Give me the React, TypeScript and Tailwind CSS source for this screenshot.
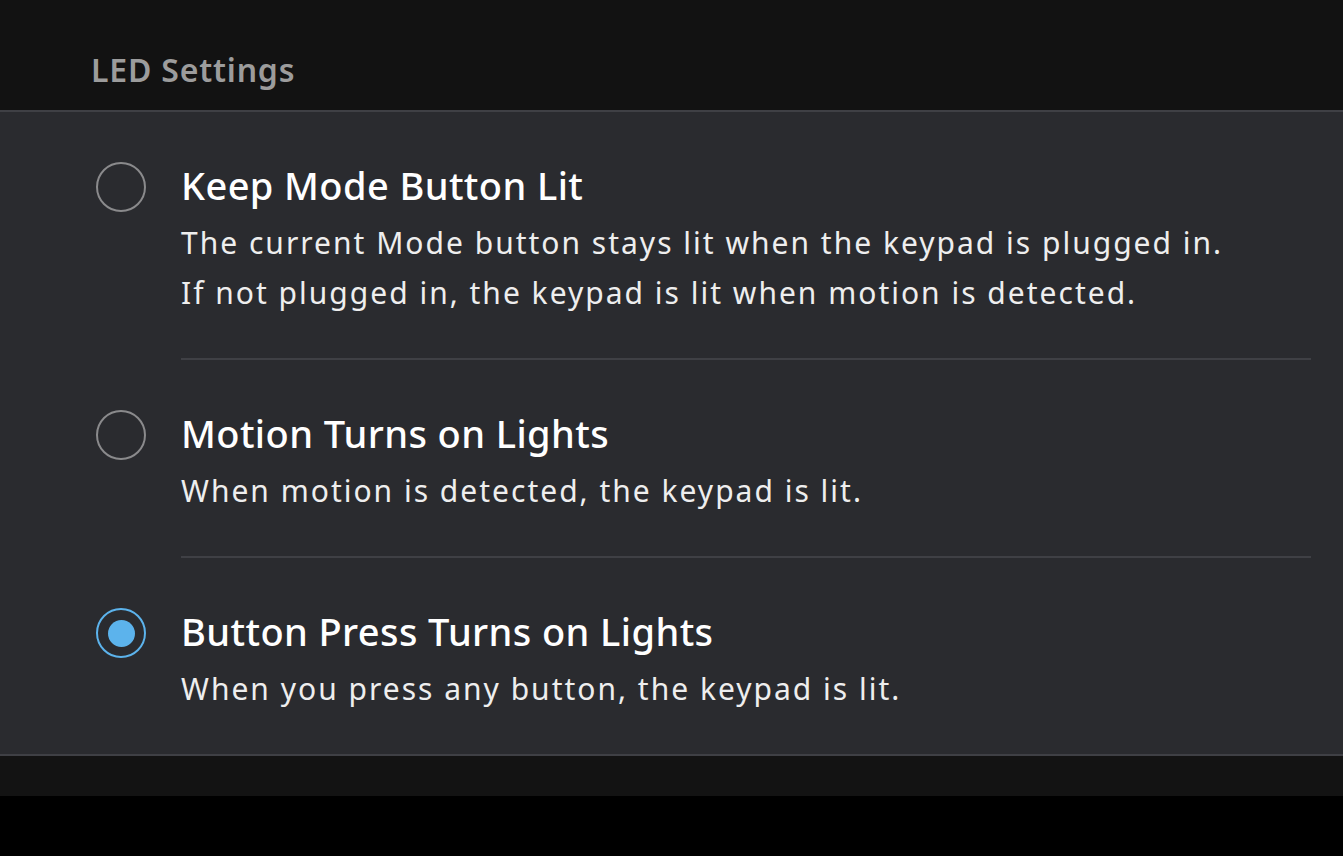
import React, { useState } from "react";

const options = [
  {
    id: "keep",
    title: "Keep Mode Button Lit",
    lines: [
      "The current Mode button stays lit when the keypad is plugged in.",
      "If not plugged in, the keypad is lit when motion is detected.",
    ],
  },
  {
    id: "motion",
    title: "Motion Turns on Lights",
    lines: ["When motion is detected, the keypad is lit."],
  },
  {
    id: "press",
    title: "Button Press Turns on Lights",
    lines: ["When you press any button, the keypad is lit."],
  },
];

function Radio({ checked }: { checked: boolean }) {
  return (
    <div
      className={
        checked
          ? "flex h-[50px] w-[50px] shrink-0 items-center justify-center rounded-full border-2 border-[#5cb3ec]"
          : "flex h-[50px] w-[50px] shrink-0 items-center justify-center rounded-full border-2 border-[#8a8a8c]"
      }
    >
      {checked && <div className="h-[27px] w-[27px] rounded-full bg-[#5cb3ec]" />}
    </div>
  );
}

export default function App() {
  const [selected, setSelected] = useState("press");

  return (
    <div className="flex h-[856px] w-[1343px] flex-col bg-black font-['Noto_Sans',sans-serif]">
      <div className="flex h-[110px] items-center bg-[#121212] pl-[91px] pt-[30px]">
        <span className="text-[32px] font-semibold tracking-[0.8px] text-[#9c9c9c]">LED Settings</span>
      </div>

      <div className="border-y-2 border-[#3f4045] bg-[#2a2b2f]">
        {options.map((opt, i) => (
          <button
            key={opt.id}
            onClick={() => setSelected(opt.id)}
            className="flex w-full text-left"
          >
            <div className="flex h-[98px] w-[181px] shrink-0 items-end pl-[96px]">
              <div className="mb-[-2px]">
                <Radio checked={selected === opt.id} />
              </div>
            </div>
            <div
              className={
                i < options.length - 1
                  ? "mr-[32px] flex-1 border-b-2 border-[#3f4045] pt-[48px] pb-[40px]"
                  : "mr-[32px] flex-1 pt-[48px] pb-[40px]"
              }
            >
              <div className="text-[38px] font-medium leading-[50px] tracking-[0.4px] text-white">{opt.title}</div>
              <div className="mt-[8px]">
                {opt.lines.map((l) => (
                  <div key={l} className="text-[30px] leading-[50px] tracking-[2px] text-[#eeeeee]">
                    {l}
                  </div>
                ))}
              </div>
            </div>
          </button>
        ))}
      </div>

      <div className="h-[40px] bg-[#131313]" />
    </div>
  );
}
